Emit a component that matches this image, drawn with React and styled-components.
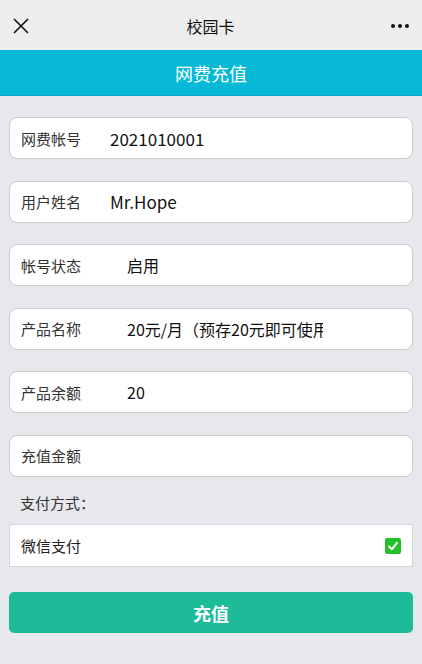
import React from 'react';
import styled, { createGlobalStyle } from 'styled-components';

const GlobalStyle = createGlobalStyle`
  html, body {
    margin: 0;
    padding: 0;
    background: #e6e8ec;
    font-family: "Noto Sans CJK SC", "Noto Sans", sans-serif;
  }
`;

const fields = [
  { label: '网费帐号', value: '2021010001', big: true },
  { label: '用户姓名', value: 'Mr.Hope', big: true },
  { label: '帐号状态', value: '启用' },
  { label: '产品名称', value: '20元/月（预存20元即可使用）' },
  { label: '产品余额', value: '20' },
  { label: '充值金额', value: '' },
];

const App = () => {
  return (
    <Page>
      <GlobalStyle />
      <NavBar>
        <NavIcon>
          <svg width="18" height="18" viewBox="0 0 18 18">
            <path d="M2 2 L16 16 M16 2 L2 16" stroke="#111" strokeWidth="1.6" fill="none" />
          </svg>
        </NavIcon>
        <NavTitle>校园卡</NavTitle>
        <NavIcon>
          <svg width="20" height="6" viewBox="0 0 20 6">
            <circle cx="3" cy="3" r="2" fill="#111" />
            <circle cx="10" cy="3" r="2" fill="#111" />
            <circle cx="17" cy="3" r="2" fill="#111" />
          </svg>
        </NavIcon>
      </NavBar>
      <Header>网费充值</Header>
      <Form>
        {fields.map((f) => (
          <Field key={f.label}>
            <Label>{f.label}</Label>
            <Value $big={f.big}>{f.value}</Value>
          </Field>
        ))}
        <SectionLabel>支付方式：</SectionLabel>
        <PayRow>
          <span>微信支付</span>
          <Check>
            <svg width="12" height="12" viewBox="0 0 12 12">
              <path d="M2 6.5 L5 9.2 L10 2.8" stroke="#fff" strokeWidth="2" fill="none" strokeLinecap="round" strokeLinejoin="round" />
            </svg>
          </Check>
        </PayRow>
        <SubmitButton>充值</SubmitButton>
      </Form>
    </Page>
  );
};

export default App;

const Page = styled.div`
  width: 422px;
  min-height: 664px;
  background: #e6e8ec;
`;

const NavBar = styled.div`
  height: 50px;
  background: #ededed;
  display: flex;
  align-items: center;
  justify-content: space-between;
  padding: 2px 12px 0 11px;
  box-sizing: border-box;
`;

const NavIcon = styled.div`
  width: 20px;
  display: flex;
  align-items: center;
  justify-content: center;
`;

const NavTitle = styled.div`
  font-size: 16px;
  color: #111;
`;

const Header = styled.div`
  height: 45px;
  background: #07b9d7;
  border-bottom: 1px solid #0aa3bd;
  color: #fff;
  font-size: 18px;
  display: flex;
  align-items: center;
  justify-content: center;
`;

const Form = styled.div`
  padding: 21px 9px 0;
  display: flex;
  flex-direction: column;
`;

const Field = styled.div`
  height: 42px;
  background: #fff;
  border: 1px solid #c9cbce;
  border-radius: 8px;
  box-sizing: border-box;
  display: flex;
  align-items: center;
  padding-left: 11px;
  margin-bottom: 21.5px;
  overflow: hidden;
`;

const Label = styled.span`
  font-size: 15px;
  color: #333;
  width: 106px;
  flex-shrink: 0;
`;

const Value = styled.span`
  font-size: ${(p) => (p.$big ? '17px' : '16px')};
  color: #111;
  margin-left: ${(p) => (p.$big ? '-17px' : '0')};
  width: 196px;
  white-space: nowrap;
  overflow: hidden;
`;

const SectionLabel = styled.div`
  font-size: 15px;
  color: #333;
  margin: -7px 0 0 11px;
  height: 33px;
  line-height: 24px;
`;

const PayRow = styled.div`
  height: 43px;
  background: #fff;
  border: 1px solid #d4d6d9;
  box-sizing: border-box;
  display: flex;
  align-items: center;
  justify-content: space-between;
  padding: 0 11px 0 11px;
  font-size: 15px;
  color: #222;
`;

const Check = styled.div`
  width: 16px;
  height: 16px;
  background: #22c12a;
  border-radius: 2px;
  display: flex;
  align-items: center;
  justify-content: center;
`;

const SubmitButton = styled.button`
  margin-top: 25px;
  height: 41px;
  border: none;
  border-radius: 5px;
  background: #1dbb98;
  color: #fff;
  font-size: 18px;
  font-weight: bold;
  font-family: "Noto Sans CJK SC", "Noto Sans", sans-serif;
`;
